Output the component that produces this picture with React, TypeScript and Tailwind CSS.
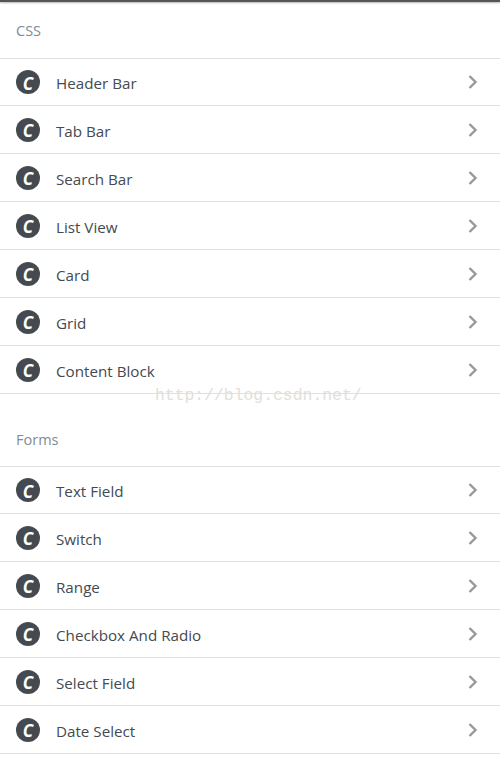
import React from 'react';

const sections = [
  { title: 'CSS', items: ['Header Bar', 'Tab Bar', 'Search Bar', 'List View', 'Card', 'Grid', 'Content Block'] },
  { title: 'Forms', items: ['Text Field', 'Switch', 'Range', 'Checkbox And Radio', 'Select Field', 'Date Select'] },
];

const Row = ({ label, first }: { label: string; first: boolean }) => (
  <div className={`flex items-center pl-[16px] pr-[21px] border-b border-[#e0e0e0] ${first ? 'h-[47px]' : 'h-[48px]'}`}>
    <div className="w-[24px] h-[24px] rounded-full bg-[#444a50] flex items-center justify-center shrink-0">
      <span className="text-white text-[17px] font-bold italic leading-none pt-[2px] font-['Open_Sans',sans-serif]">C</span>
    </div>
    <span className="ml-[16px] flex-1 text-[15.2px] pt-[3px] text-[#444a50]">{label}</span>
    <svg width="12" height="16" viewBox="0 0 12 16" fill="none" className="text-[#97979c]">
      <path d="M2.5 2 L8.5 8 L2.5 14" stroke="currentColor" strokeWidth="2.4" />
    </svg>
  </div>
);

export default function App() {
  return (
    <div className="relative h-[769px] w-full overflow-hidden bg-white font-['Open_Sans',sans-serif]">
      <div className="h-[2px] bg-[#555] shadow-[0_1px_2px_rgba(0,0,0,0.3)]" />
      {sections.map((section, i) => (
        <div key={section.title} className={i > 0 ? 'mt-[24px]' : ''}>
          <div className={`flex items-center px-[16px] border-b border-[#e0e0e0] text-[14.5px] text-[#7f8b94] ${i > 0 ? 'h-[49px] pb-[4px]' : 'h-[57px] pt-[2px]'}`}>
            {section.title}
          </div>
          {section.items.map((item, j) => (
            <Row key={item} label={item} first={j === 0} />
          ))}
        </div>
      ))}
      {/* csdn watermark */}
      <div className="absolute left-[155px] top-[386px] text-[16.4px] leading-[20px] text-[#e2e0d9] font-['Liberation_Mono',monospace] pointer-events-none">
        http://blog.csdn.net/
      </div>
    </div>
  );
}
